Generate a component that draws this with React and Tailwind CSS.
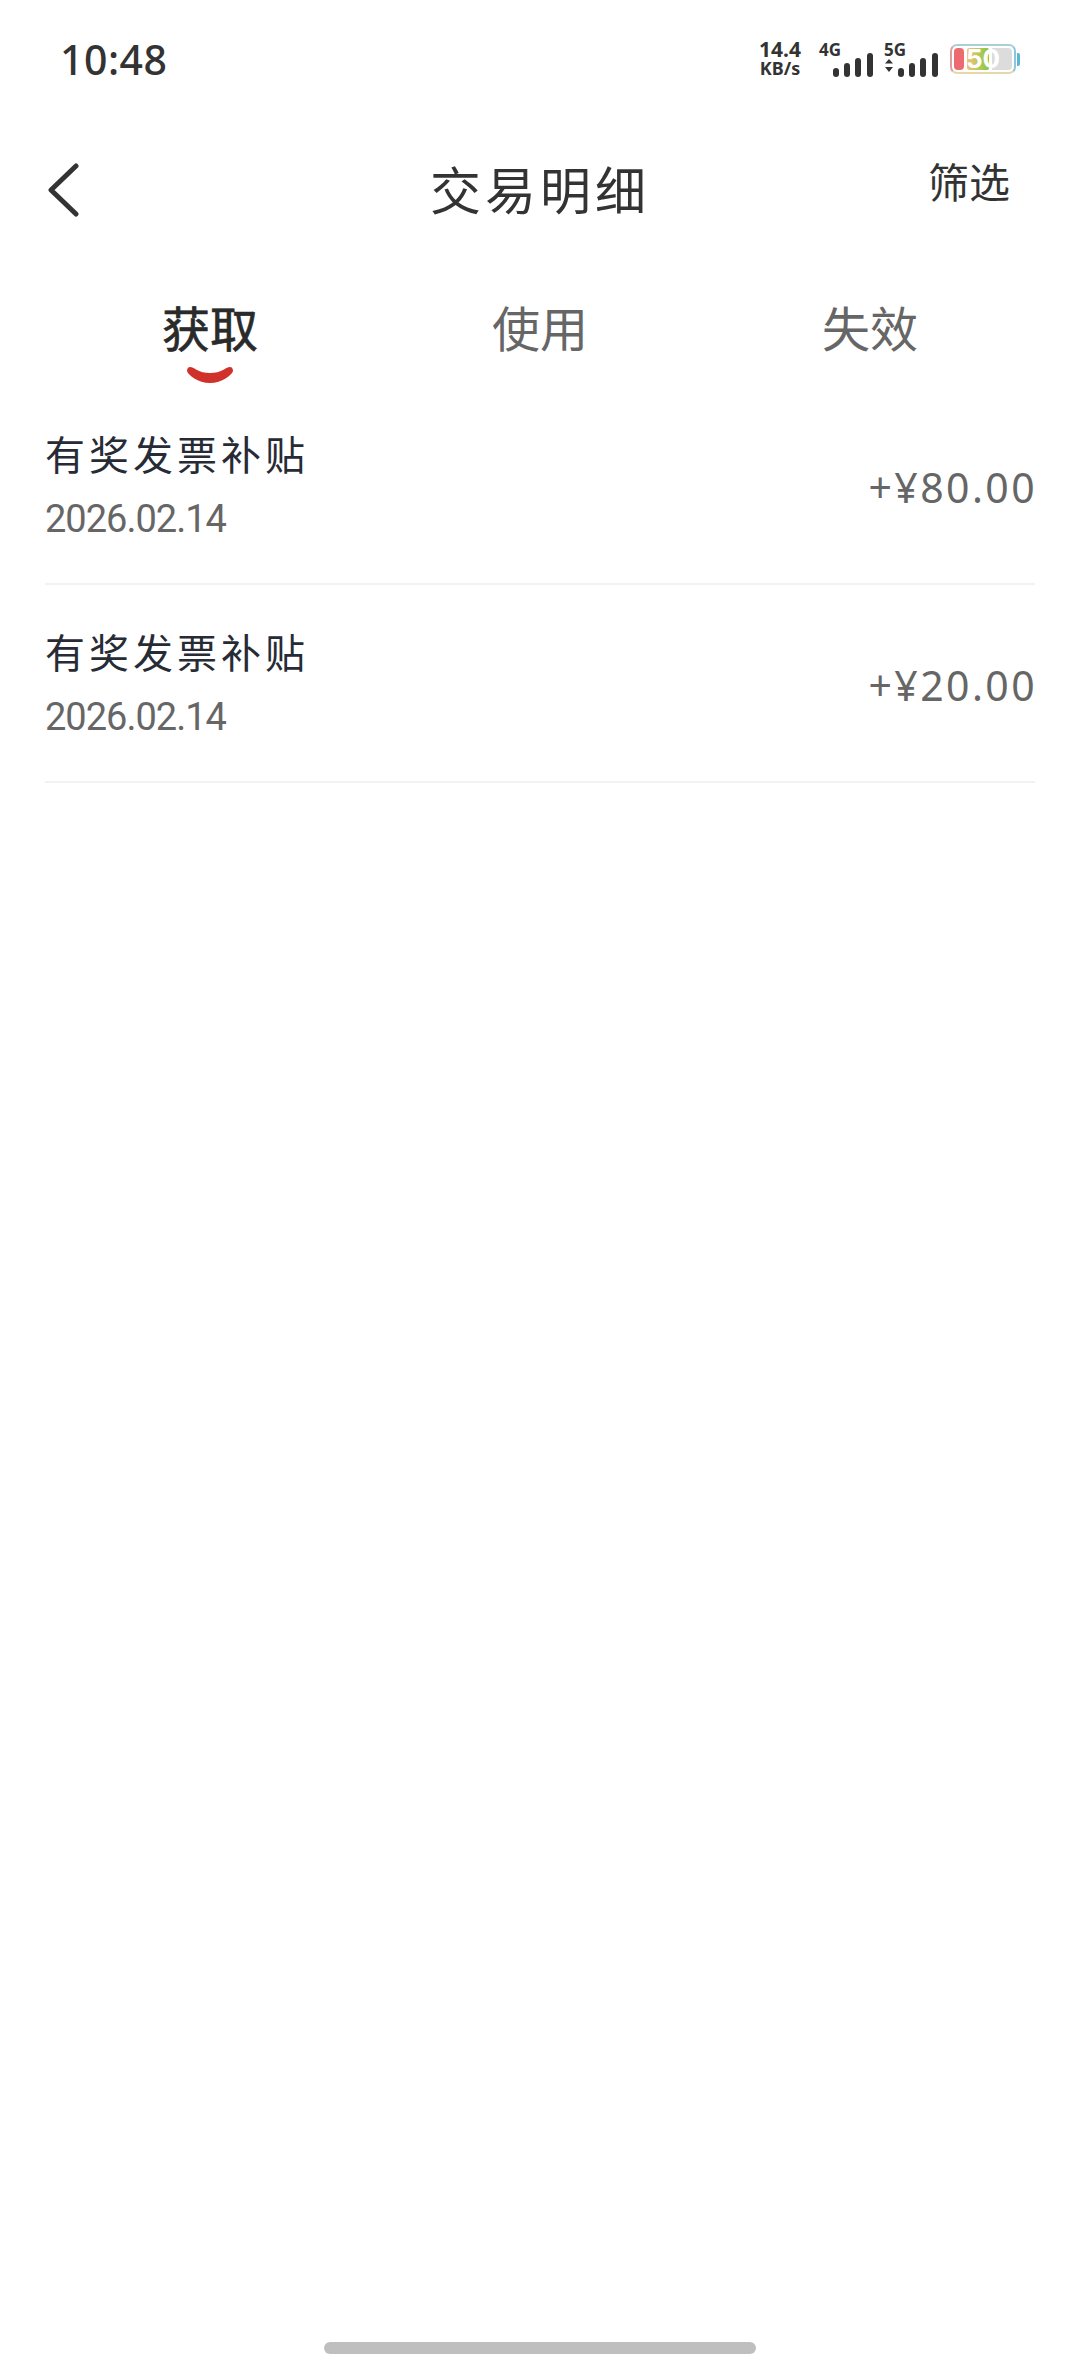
const cjk = "font-['Noto_Sans_CJK_SC','Noto_Sans',sans-serif]"

const records = [
  { title: '有奖发票补贴', date: '2026.02.14', amount: '+¥80.00' },
  { title: '有奖发票补贴', date: '2026.02.14', amount: '+¥20.00' },
]

function SignalBars({ label, arrows }) {
  return (
    <div className="relative w-[54px] h-[36px]">
      <span className="absolute left-0 top-0 text-[17px] leading-[17px] font-bold text-[#333]">{label}</span>
      <svg className="absolute left-0 top-0" width="54" height="36" viewBox="0 0 54 36" fill="#333">
        {arrows && (
          <>
            <path d="M1 22.5 L5 18 L9 22.5 Z" />
            <path d="M1 26 L5 31 L9 26 Z" />
          </>
        )}
        <rect x="14" y="27" width="6" height="9" rx="3" />
        <rect x="25" y="22" width="6" height="14" rx="3" />
        <rect x="36" y="17" width="6" height="19" rx="3" />
        <rect x="48" y="12" width="6" height="24" rx="3" />
      </svg>
    </div>
  )
}

function Battery() {
  return (
    <div className="flex items-center">
      <div className="relative flex w-[66px] h-[30px] gap-[3px] p-[2px] rounded-[7px] border-2 border-r-[#8cc5dc] border-t-[#a8d0d8] border-b-[#e6d8a8] border-l-[#dba0a0] bg-white">
        <div className="w-[10px] rounded-[4px] bg-[#ec6a70]" />
        <div className="w-[22px] rounded-[2px] bg-gradient-to-r from-[#f3c27a] to-[#7cc93a]" />
        <div className="flex-1 rounded-r-[4px] bg-[#dcdcdc]" />
        <span className="absolute left-[14px] top-[-3px] text-[26px] leading-[32px] font-bold text-white font-['Inter',sans-serif]">50</span>
      </div>
      <div className="w-[3px] h-[13px] ml-[1px] rounded-r-[2px] bg-[#5cb4d8]" />
    </div>
  )
}

function StatusBar() {
  return (
    <div className="flex h-[118px] items-center justify-between pl-[60px] pr-[60px] font-['Noto_Sans',sans-serif] text-[#333]">
      <span className="text-[41px] font-medium leading-none tracking-[0.5px]">10:48</span>
      <div className="flex items-center">
        <div className="flex flex-col items-center mr-[16px] w-[46px] text-[21px] font-bold leading-[19px]">
          <span>14.4</span>
          <span className="text-[18px]">KB/s</span>
        </div>
        <SignalBars label="4G" />
        <div className="w-[11px]" />
        <SignalBars label="5G" arrows />
        <div className="w-[12px]" />
        <Battery />
      </div>
    </div>
  )
}

function NavBar() {
  return (
    <div className="relative flex h-[140px] items-center justify-center">
      <svg className="absolute left-[46px] top-[45px]" width="34" height="54" viewBox="0 0 34 54" fill="none" stroke="#333" strokeWidth="5" strokeLinecap="round" strokeLinejoin="round">
        <path d="M30 3 L5 27 L30 51" />
      </svg>
      <h1 className="text-[51px] leading-none font-normal tracking-[4px] text-[#333]">交易明细</h1>
      <span className="absolute left-[928px] top-[42px] text-[41px] leading-none text-[#333]">筛选</span>
    </div>
  )
}

function Tabs() {
  const tabs = ['获取', '使用', '失效']
  return (
    <div className="grid grid-cols-3 h-[129px] px-[45px]">
      {tabs.map((tab, i) => (
        <div key={tab} className="relative flex justify-center pt-[44px]">
          <span className={i === 0 ? 'text-[48px] leading-none font-normal text-[#2a2a2a] [-webkit-text-stroke:0.7px_#2a2a2a]' : 'text-[48px] leading-none text-[#666]'}>{tab}</span>
          {i === 0 && (
            <svg className="absolute left-[142px] top-[108px]" width="46" height="18" viewBox="0 0 46 18" fill="#d0312a">
              <path d="M3 1 C1 1 0 3 0 5 C1 9 11 17 23 17 C35 17 45 9 46 5 C46 3 45 1 43 1 C41 1 39 2 37 3.5 C33 6 28 7 23 7 C18 7 13 6 9 3.5 C7 2 5 1 3 1 Z" />
            </svg>
          )}
        </div>
      ))}
    </div>
  )
}

function RecordRow({ title, date, amount }) {
  return (
    <div className="flex h-[198px] items-center justify-between border-b-2 border-[#f2f2f2]">
      <div className="flex flex-col">
        <span className="text-[40px] leading-none tracking-[4px] text-[#272b36]">{title}</span>
        <span className="mt-[27px] text-[38px] leading-none tracking-[-1px] text-[#666] font-['Roboto',sans-serif]">{date}</span>
      </div>
      <span className="mt-[4px] mr-[-2px] text-[41px] leading-none tracking-[2.4px] text-[#666] font-['Noto_Sans',sans-serif]">{amount}</span>
    </div>
  )
}

export default function App() {
  return (
    <div className={`relative flex flex-col h-[2376px] w-[1080px] bg-white ${cjk}`}>
      <StatusBar />
      <NavBar />
      <Tabs />
      <div className="flex flex-col px-[45px] flex-1">
        {records.map((r, i) => (
          <RecordRow key={i} {...r} />
        ))}
      </div>
      {/* home indicator */}
      <div className="flex justify-center pb-[22px]">
        <div className="w-[432px] h-[12px] rounded-full bg-[#bfbfbf]" />
      </div>
    </div>
  )
}
